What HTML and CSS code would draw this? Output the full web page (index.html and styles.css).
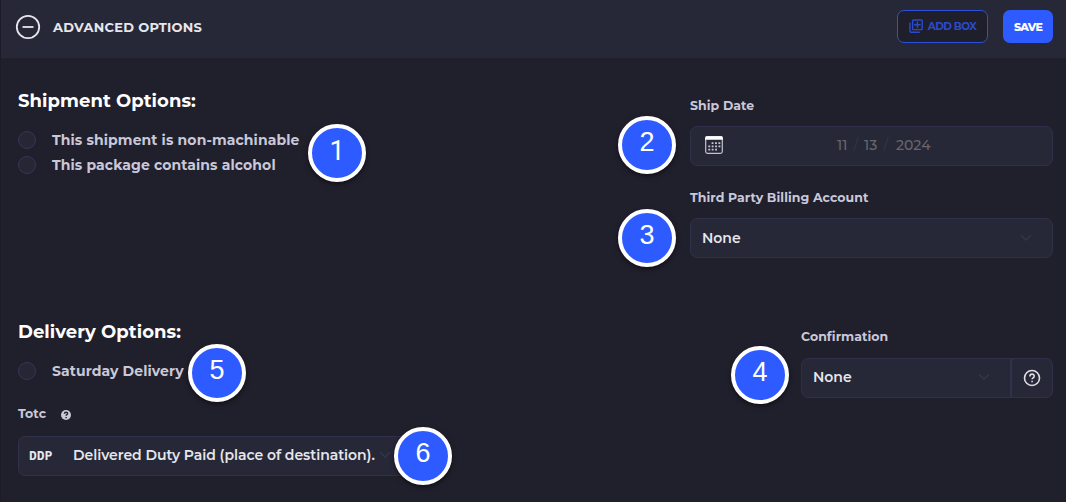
FILE: index.html
```html
<!DOCTYPE html>
<html lang="en">
<head>
  <meta charset="UTF-8" />
  <meta name="viewport" content="width=device-width, initial-scale=1.0"/>
  <title>Advanced Options</title>
  <link rel="stylesheet" href="styles.css">
</head>
<body>
  <div class="panel">
    <header class="panel-header">
      <svg class="collapse-icon" width="26" height="26" viewBox="0 0 26 26">
        <circle cx="13" cy="13" r="11.2" />
        <path d="M7.5 13h11" />
      </svg>
      <h2 class="panel-title">ADVANCED OPTIONS</h2>
      <button class="btn btn-outline">
        <svg class="box-icon" width="14" height="15" viewBox="0 0 14 15">
          <rect x="3.6" y="1" width="9.6" height="9.6" rx="0.8" />
          <path d="M8.4 2.6v6.4M5.2 5.8h6.4M1 3.6v8.6c0 .6.4 1 1 1h8.8" />
        </svg>
        <span>ADD BOX</span>
      </button>
      <button class="btn btn-primary">SAVE</button>
    </header>

    <!-- Shipment -->
    <section class="row row-shipment">
      <div class="col-left">
        <h3>Shipment Options:</h3>
        <label class="check"><span class="dot"></span>This shipment is non-machinable</label>
        <label class="check"><span class="dot"></span>This package contains alcohol</label>
      </div>
      <div class="col-right">
        <div class="label">Ship Date</div>
        <div class="field date-field">
          <svg class="calendar-icon" width="20" height="20" viewBox="0 0 20 20">
            <rect x="1.7" y="1.7" width="16.6" height="16.6" rx="1.8" />
            <path class="bar" d="M1.2 4.8V2.8c0-1 .6-1.6 1.6-1.6h14.4c1 0 1.6.6 1.6 1.6v2z" />
            <path class="days" d="M7.6 8.2h9M4.3 11.4h12.3M4.3 14.7h9" />
          </svg>
          <div class="date"><span class="month">11</span><i>/</i><span class="day">13</span><i>/</i><span class="year">2024</span></div>
        </div>
        <div class="label">Third Party Billing Account</div>
        <div class="field">
          <span>None</span>
          <svg class="chevron" width="12" height="8" viewBox="0 0 12 8"><path d="M1.2 1.2 6 6l4.8-4.8" /></svg>
        </div>
      </div>
    </section>

    <!-- Delivery -->
    <section class="row">
      <div class="col-left">
        <h3>Delivery Options:</h3>
        <label class="check"><span class="dot"></span>Saturday Delivery</label>
        <div class="label totc">
          <span>Totc</span>
          <svg width="12" height="12" viewBox="0 0 12 12">
            <circle class="help-fill" cx="6" cy="6" r="5" />
            <path class="help-mark" d="M4.4 4.7c.1-2 3.3-1.9 3.2-.1 0 1-1.5 1.1-1.5 2.2M6.1 8v1.2" />
          </svg>
        </div>
        <div class="field totc-field">
          <span class="code">DDP</span>
          <span>Delivered Duty Paid (place of destination).</span>
          <svg class="chevron" width="12" height="8" viewBox="0 0 12 8"><path d="M1.2 1.2 6 6l4.8-4.8" /></svg>
        </div>
      </div>
      <div class="col-right confirm">
        <div class="label">Confirmation</div>
        <div class="field-group">
          <div class="field">
            <span>None</span>
            <svg class="chevron" width="12" height="8" viewBox="0 0 12 8"><path d="M1.2 1.2 6 6l4.8-4.8" /></svg>
          </div>
          <div class="help">
            <svg width="18" height="18" viewBox="0 0 18 18">
              <circle cx="9" cy="9" r="7.5" />
              <path d="M6.9 7.4c0-3 4.4-2.9 4.3-.2 0 1.6-2.1 1.6-2.1 3.1M9.1 11.7v1.6" />
            </svg>
          </div>
        </div>
      </div>
    </section>

    <!-- Callouts -->
    <span class="marker m1">1</span>
    <span class="marker m2">2</span>
    <span class="marker m3">3</span>
    <span class="marker m4">4</span>
    <span class="marker m5">5</span>
    <span class="marker m6">6</span>
  </div>
</body>
</html>
```

FILE: styles.css
```css
:root {
  --bg: #201f2c;
  --card: #272837;
  --border: #2f3049;
  --text: #e6e6ec;
  --label: #c9c8d8;
  --blue: #2e5bff;
}

* {
  box-sizing: border-box;
}

body {
  margin: 0;
  background: var(--bg);
  color: var(--text);
  font-family: Montserrat, Inter, sans-serif;
}

.panel {
  position: relative;
  height: 502px;
  overflow: hidden;
  border-left: 1px solid #1c1b27;
}

.panel-header {
  display: flex;
  align-items: center;
  height: 58px;
  padding: 0 13px 5px 14px;
  background: var(--card);
}

.collapse-icon {
  fill: none;
  stroke: var(--text);
  stroke-width: 1.8;
}

.panel-title {
  flex: 1;
  margin: 0 0 0 12px;
  font-size: 13px;
  font-weight: 700;
  letter-spacing: 0.28px;
  white-space: nowrap;
}

.btn {
  display: flex;
  align-items: center;
  justify-content: center;
  height: 33px;
  padding: 0;
  border-radius: 7px;
  font-family: inherit;
  font-size: 11px;
  font-weight: 700;
}

.btn-outline {
  gap: 5px;
  width: 91px;
  margin-right: 15px;
  border: 1px solid #2b50dc;
  background: #1f1e2b;
  color: #2a4bcb;
  font-size: 10.5px;
  letter-spacing: -0.55px;
}

.btn-primary {
  width: 50px;
  border: none;
  background: var(--blue);
  color: #fff;
  font-weight: 800;
  letter-spacing: -0.7px;
}

.box-icon {
  fill: none;
  stroke: #2a4bcb;
  stroke-width: 1.4;
}

.row {
  display: flex;
  justify-content: space-between;
  padding: 0 13px 0 17px;
}

.row-shipment {
  height: 261px;
  padding-top: 30px;
}

h3 {
  margin: 0 0 14px;
  padding-top: 1px;
  color: #fff;
  font-size: 18px;
  font-weight: 700;
  letter-spacing: 0.06px;
  line-height: 24px;
}

.check {
  display: flex;
  align-items: center;
  height: 25px;
  color: var(--label);
  font-size: 14px;
  font-weight: 700;
  letter-spacing: 0.1px;
  white-space: nowrap;
}

.dot {
  width: 18px;
  height: 18px;
  margin-right: 16px;
  border: 1px solid #35365a;
  border-radius: 50%;
  background: #252735;
}

.col-right {
  width: 363px;
  padding-top: 9px;
}

.label {
  height: 16px;
  margin-bottom: 13px;
  color: var(--label);
  font-size: 12.5px;
  font-weight: 700;
  letter-spacing: 0.07px;
  line-height: 18px;
}

.field {
  display: flex;
  align-items: center;
  justify-content: space-between;
  height: 40px;
  padding: 0 20px 1px 11px;
  border: 1px solid var(--border);
  border-radius: 7px;
  background: var(--card);
  font-size: 14px;
  font-weight: 600;
  white-space: nowrap;
}

.chevron {
  fill: none;
  stroke: #33344e;
  stroke-width: 1.4;
}

.date-field {
  justify-content: flex-start;
  margin-bottom: 23px;
  padding-bottom: 2px;
  padding-left: 13px;
}

.calendar-icon {
  fill: none;
  stroke: #c4c4cc;
  stroke-width: 1.2;
}

.calendar-icon .bar {
  fill: #fff;
  stroke: none;
}

.calendar-icon .days {
  stroke-width: 1.8;
  stroke-dasharray: 1.9 1.5;
}

.date {
  display: flex;
  margin-left: 113px;
  color: #66666c;
  font-weight: 500;
}

.date i {
  width: 16px;
  color: #313249;
  font-style: normal;
  text-align: center;
}

.month {
  width: 11px;
}

.day {
  width: 14px;
}

.year {
  margin-left: 2px;
}

.totc {
  display: flex;
  align-items: center;
  gap: 14px;
  height: 18px;
  margin: 22px 0 13px;
}

.totc svg {
  margin-top: 2px;
}

.help-fill {
  fill: var(--label);
}

.help-mark {
  fill: none;
  stroke: var(--bg);
  stroke-width: 1.4;
}

.totc-field {
  justify-content: flex-start;
  width: 390px;
  padding-right: 0;
  padding-bottom: 2px;
  padding-left: 10px;
  letter-spacing: -0.04px;
}

.code {
  flex: none;
  width: 44px;
  font-family: "DejaVu Sans Mono", monospace;
  font-size: 13px;
  font-weight: 700;
}

.totc-field .chevron {
  margin-left: 4px;
}

.confirm {
  width: 252px;
}

.confirm .label {
  margin-bottom: 14px;
}

.field-group {
  display: flex;
}

.field-group .field {
  flex: 1;
  padding-bottom: 2px;
  border-radius: 7px 0 0 7px;
}

.help {
  display: flex;
  align-items: center;
  justify-content: center;
  width: 42px;
  padding-right: 1px;
  border: 1px solid var(--border);
  border-left: 1px solid #32334c;
  border-radius: 0 7px 7px 0;
  background: var(--card);
}

.help svg {
  fill: none;
  stroke: #dedee4;
  stroke-width: 1.6;
}

/* numbered callouts sit over the form */
.marker {
  position: absolute;
  width: 58px;
  height: 58px;
  border: 4px solid #fff;
  border-radius: 50%;
  background: var(--blue);
  box-shadow: 0 2px 5px rgba(0, 0, 0, 0.5);
  color: #fff;
  font-family: "Liberation Sans", Arial, sans-serif;
  font-size: 27px;
  line-height: 45px;
  text-align: center;
}

.m1 { left: 307px; top: 124px; font-family: Roboto, sans-serif; line-height: 46px; }
.m2 { left: 617px; top: 116px; }
.m3 { left: 617px; top: 209px; }
.m4 { left: 730px; top: 346px; }
.m5 { left: 187px; top: 344px; }
.m6 { left: 393px; top: 427px; }
```
